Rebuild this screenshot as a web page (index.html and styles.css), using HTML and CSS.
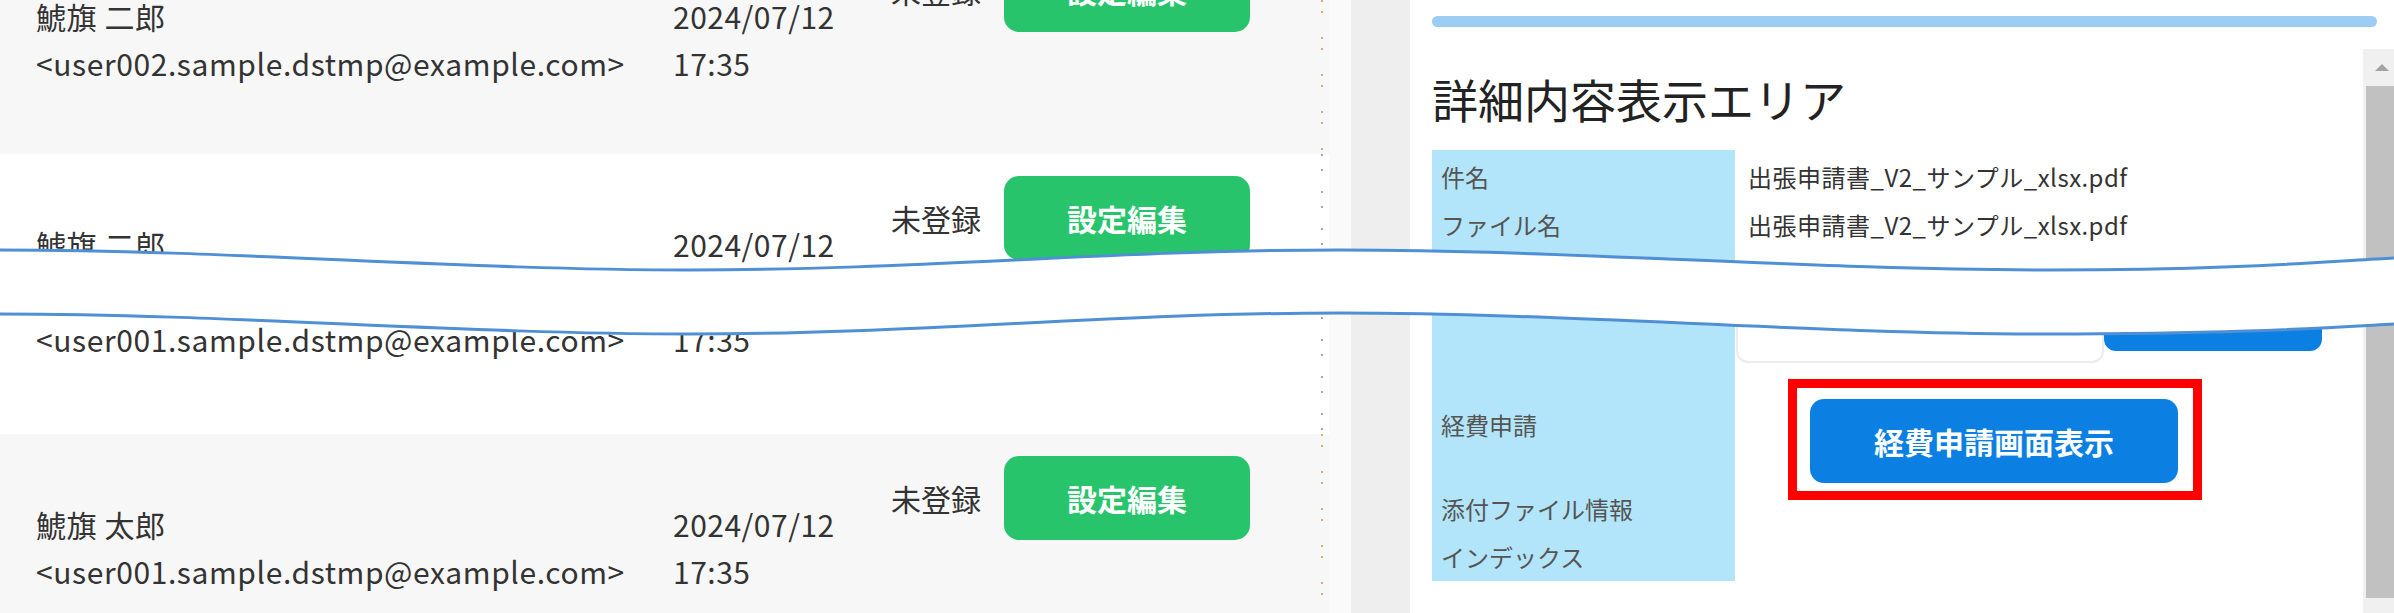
FILE: index.html
```html
<!DOCTYPE html>
<html lang="ja">
<head>
    <meta charset="UTF-8">
    <title>詳細内容表示エリア</title>
    <link rel="stylesheet" href="styles.css">
</head>
<body>
    <div class="page">
        <div class="list">
            <div class="row shaded">
                <div class="who">
                    <p>鯱旗 二郎</p>
                    <p>&lt;user002.sample.dstmp@example.com&gt;</p>
                </div>
                <div class="when">
                    <p>2024/07/12</p>
                    <p>17:35</p>
                </div>
                <div class="status">未登録</div>
                <button class="edit-button">設定編集</button>
            </div>
            <div class="row plain cut">
                <div class="who">
                    <p>鯱旗 二郎</p>
                    <p>&lt;user001.sample.dstmp@example.com&gt;</p>
                </div>
                <div class="when">
                    <p>2024/07/12</p>
                    <p>17:35</p>
                </div>
                <div class="status">未登録</div>
                <button class="edit-button">設定編集</button>
            </div>
            <div class="row shaded">
                <div class="who">
                    <p>鯱旗 太郎</p>
                    <p>&lt;user001.sample.dstmp@example.com&gt;</p>
                </div>
                <div class="when">
                    <p>2024/07/12</p>
                    <p>17:35</p>
                </div>
                <div class="status">未登録</div>
                <button class="edit-button">設定編集</button>
            </div>
        </div>
        <div class="gutter"></div>
        <div class="rail"></div>
        <div class="pane">
            <div class="topbar"></div>
            <div class="pane-body">
                <div class="content">
                    <h2>詳細内容表示エリア</h2>
                    <div class="info">
                        <div class="info-row first">
                            <div class="label">件名</div>
                            <div class="value">出張申請書_V2_サンプル_xlsx.pdf</div>
                        </div>
                        <div class="info-row">
                            <div class="label">ファイル名</div>
                            <div class="value">出張申請書_V2_サンプル_xlsx.pdf</div>
                        </div>
                        <div class="info-row hidden-row">
                            <div class="label"></div>
                            <div class="value">
                                <div class="field"></div>
                                <button class="small-button"></button>
                            </div>
                        </div>
                        <div class="info-row expense">
                            <div class="label">経費申請</div>
                            <div class="value">
                                <div class="marked">
                                    <button class="expense-button">経費申請画面表示</button>
                                </div>
                            </div>
                        </div>
                        <div class="info-row">
                            <div class="label">添付ファイル情報</div>
                            <div class="value"></div>
                        </div>
                        <div class="info-row">
                            <div class="label">インデックス</div>
                            <div class="value"></div>
                        </div>
                    </div>
                </div>
                <div class="scroll">
                    <div class="arrow-up"><span class="tri"></span></div>
                    <div class="thumb"></div>
                </div>
            </div>
        </div>
    </div>

    <!-- omission mark over the screenshot -->
    <svg class="wave" width="2394" height="613" viewBox="0 0 2394 613">
        <path fill="#fff" d="M0,250 C230,250 460,270 690,270 C920,270 1110,250 1340,250 C1570,250 1810,270 2050,270 C2230,270 2320,262 2394,258 L2394,324 C2320,328 2230,334 2050,334 C1810,334 1570,313 1340,313 C1110,313 920,334 690,334 C460,334 230,314 0,314 Z"/>
        <path fill="none" stroke="#4f8fd6" stroke-width="3" d="M0,250 C230,250 460,270 690,270 C920,270 1110,250 1340,250 C1570,250 1810,270 2050,270 C2230,270 2320,262 2394,258"/>
        <path fill="none" stroke="#4f8fd6" stroke-width="3" d="M0,314 C230,314 460,334 690,334 C920,334 1110,313 1340,313 C1570,313 1810,334 2050,334 C2230,334 2320,328 2394,324"/>
    </svg>
</body>
</html>
```

FILE: styles.css
```css
body {
    margin: 0;
    width: 2394px;
    height: 613px;
    overflow: hidden;
    position: relative;
    background: #fff;
    font-family: "Noto Sans CJK JP", "Noto Sans", sans-serif;
    color: #333;
}
p {
    margin: 0;
}
button {
    font-family: inherit;
    border: none;
    cursor: pointer;
}
.page {
    display: flex;
    height: 613px;
    overflow: hidden;
}

/* left list */
.list {
    width: 1329px;
    margin-top: -74px;
    flex-shrink: 0;
}
.row {
    display: flex;
    align-items: flex-start;
    height: 228px;
    box-sizing: border-box;
    padding: 22px 0 0 36px;
    font-size: 30px;
    line-height: 47px;
    background-repeat: no-repeat;
    background-size: 2px 100%;
    background-position: 1321px 0;
}
.row.shaded {
    background-color: #f7f7f7;
    background-image: repeating-linear-gradient(to bottom, #d9a77a 0 2px, transparent 2px 11px, #d9a77a 11px 13px, transparent 13px 37px);
}
.row.plain {
    background-color: #fff;
    background-image: repeating-linear-gradient(to bottom, #a9a9a9 0 2px, transparent 2px 15px, #a9a9a9 15px 17px, transparent 17px 37px);
}
.row.cut {
    height: 280px;
}
.row.cut p + p {
    margin-top: 48px;
}
.who {
    width: 637px;
    margin-top: 45px;
    white-space: nowrap;
    letter-spacing: 0.6px;
}
.when {
    width: 218px;
    margin-top: 45px;
    letter-spacing: 0.5px;
}
.status {
    width: 113px;
    height: 84px;
    line-height: 84px;
}
.edit-button {
    width: 246px;
    height: 84px;
    border-radius: 15px;
    background-color: #27c46c;
    color: #fff;
    font-size: 30px;
    font-weight: bold;
}

.gutter {
    width: 22px;
    background: #fafafa;
    flex-shrink: 0;
}
.rail {
    width: 59px;
    background: #eeeeee;
    flex-shrink: 0;
}

/* right detail pane */
.pane {
    flex: 1;
    display: flex;
    flex-direction: column;
    padding-left: 22px;
}
.topbar {
    width: 945px;
    height: 11px;
    margin-top: 16px;
    border-radius: 6px;
    background: #9ccdf2;
}
.pane-body {
    flex: 1;
    display: flex;
    margin-top: 22px;
}
.content {
    flex: 1;
    padding-top: 19px;
}
h2 {
    margin: 0 0 22px;
    font-size: 46px;
    line-height: 60px;
    font-weight: normal;
    color: #222;
}
.info-row {
    display: grid;
    grid-template-columns: 303px 1fr;
    font-size: 24px;
    line-height: 48px;
}
.label {
    background: #b3e5fa;
    padding-left: 9px;
    color: #555;
    white-space: nowrap;
}
.value {
    padding-left: 13px;
    white-space: nowrap;
    letter-spacing: 0.5px;
}
.info-row.first .label,
.info-row.first .value {
    padding-top: 3px;
}
.hidden-row {
    height: 121px;
}
.hidden-row .value {
    display: flex;
    align-items: flex-start;
    padding: 40px 0 0 1px;
}
.field {
    width: 368px;
    height: 62px;
    margin-top: 12px;
    border: 2px solid #ececec;
    border-radius: 12px;
    box-sizing: border-box;
}
.small-button {
    width: 218px;
    height: 62px;
    border-radius: 12px;
    background: #0b80e2;
}
.expense {
    height: 115px;
}
.expense .label {
    padding-top: 31px;
}
.expense .value {
    padding: 29px 0 0 75px;
}
.marked {
    position: relative;
    width: 368px;
}
.marked::after {
    content: "";
    position: absolute;
    left: -22px;
    top: -20px;
    right: -24px;
    bottom: -17px;
    border: 9px solid #ff0000;
}
.expense-button {
    display: block;
    width: 368px;
    height: 84px;
    border-radius: 14px;
    background: #0b80e2;
    color: #fff;
    font-size: 30px;
    font-weight: bold;
}

/* scrollbar */
.scroll {
    width: 31px;
    background: #f0f0f0;
    display: flex;
    flex-direction: column;
}
.arrow-up {
    height: 37px;
    display: flex;
    align-items: center;
    padding-left: 12px;
}
.tri {
    width: 0;
    height: 0;
    border-left: 7px solid transparent;
    border-right: 7px solid transparent;
    border-bottom: 7px solid #a3a3a3;
}
.thumb {
    height: 512px;
    margin-left: 3px;
    background: #c1c1c1;
}

.wave {
    position: absolute;
    left: 0;
    top: 0;
    pointer-events: none;
}
```
